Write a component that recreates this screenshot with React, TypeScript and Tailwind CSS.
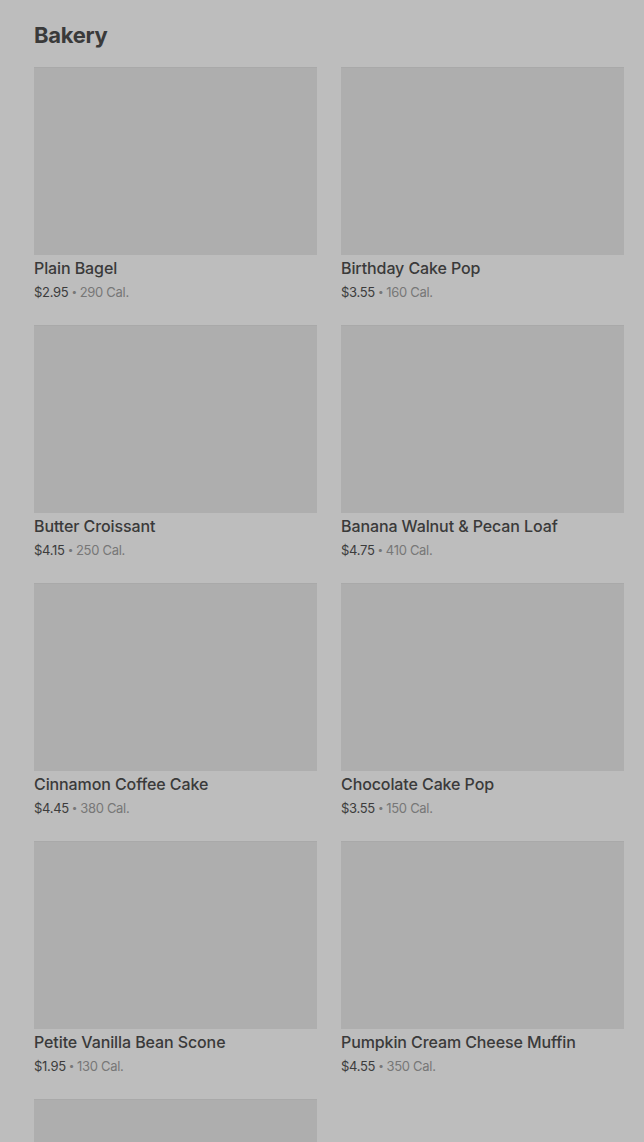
const items = [
  { name: "Plain Bagel", price: "$2.95", cal: "290 Cal." },
  { name: "Birthday Cake Pop", price: "$3.55", cal: "160 Cal." },
  { name: "Butter Croissant", price: "$4.15", cal: "250 Cal." },
  { name: "Banana Walnut & Pecan Loaf", price: "$4.75", cal: "410 Cal." },
  { name: "Cinnamon Coffee Cake", price: "$4.45", cal: "380 Cal." },
  { name: "Chocolate Cake Pop", price: "$3.55", cal: "150 Cal." },
  { name: "Petite Vanilla Bean Scone", price: "$1.95", cal: "130 Cal." },
  { name: "Pumpkin Cream Cheese Muffin", price: "$4.55", cal: "350 Cal." },
  { name: "", price: "", cal: "" },
]

function Item({ name, price, cal }: { name: string; price: string; cal: string }) {
  return (
    <div className="flex flex-col h-[258px]">
      <div className="h-[188px] bg-[#aeaeae] border-t border-[#a9a9a9]" />
      {name && (
        <>
          <div className="mt-[1px] text-[16px] leading-[24px] font-medium tracking-[-0.1px] text-[#3a3a3a]">{name}</div>
          <div className="mt-[1px] text-[13px] leading-[20px] tracking-[-0.3px]">
            <span className="text-[#3c3c3c]">{price}</span>
            <span className="text-[#777777] mx-[3px] text-[10px] align-[2px]">•</span>
            <span className="text-[#777777]">{cal}</span>
          </div>
        </>
      )}
    </div>
  )
}

export default function App() {
  return (
    <div className="min-h-[1142px] h-[1142px] overflow-hidden bg-[#bdbdbd] pl-[34px] pr-[20px] font-['Inter',sans-serif]">
      <h2 className="pt-[20px] h-[67px] text-[22px] leading-[30px] font-bold tracking-[-0.3px] text-[#3a3a3a]">Bakery</h2>
      <div className="grid grid-cols-2 gap-x-[24px]">
        {items.map((it, i) => (
          <Item key={i} {...it} />
        ))}
      </div>
    </div>
  )
}
